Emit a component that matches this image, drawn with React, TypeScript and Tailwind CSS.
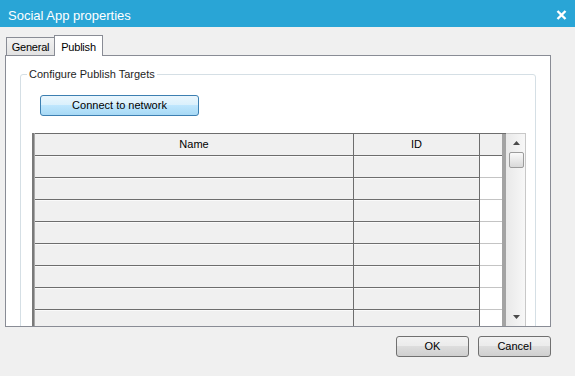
import React from "react";

const rows = Array.from({ length: 8 });

function CloseIcon() {
  return (
    <svg width="11" height="10" viewBox="0 0 11 10">
      <path d="M1.5 1 L9.5 9 M9.5 1 L1.5 9" stroke="#fff" strokeWidth="2.4" />
    </svg>
  );
}

function Arrow({ down }: { down?: boolean }) {
  return (
    <svg width="7" height="4" viewBox="0 0 7 4">
      <path d={down ? "M0 0 L7 0 L3.5 4Z" : "M0 4 L3.5 0 L7 4Z"} fill="#4a4a4a" />
    </svg>
  );
}

function Scrollbar() {
  return (
    <div className="flex w-[21px] flex-col border-r border-t border-[#c8c8c8] bg-gradient-to-r from-[#e9e9e9] to-[#f7f7f7] pb-px">
      <div className="flex h-[17px] items-center justify-center pl-px pt-px">
        <Arrow />
      </div>
      <div className="ml-[3px] mt-[1px] h-[16px] w-[15px] rounded-[2px] border border-[#9c9c9c] bg-gradient-to-b from-[#fafafa] to-[#d9d9d9]" />
      <div className="flex-1" />
      <div className="flex h-[17px] items-center justify-center pl-px">
        <Arrow down />
      </div>
    </div>
  );
}

function Grid() {
  return (
    <div className="flex h-[193px] w-[494px]">
      <div className="flex border-l-2 border-[#7a7a7a]">
        <div className="flex flex-col overflow-hidden border-l border-[#a8a8a8]">
          <div className="flex h-[23px] shrink-0 border-y border-[#6d6d6d] bg-[#f0f0f0] text-black">
            <div className="flex w-[319px] items-center justify-center border-r border-[#6d6d6d]">Name</div>
            <div className="flex w-[126px] items-center justify-center border-r border-[#6d6d6d]">ID</div>
            <div className="w-[22px]" />
          </div>
          {rows.map((_, i) => (
            <div key={i} className="flex h-[22px] shrink-0">
              <div className="w-[319px] border-b border-r border-[#6d6d6d] bg-[#f0f0f0] shadow-[inset_0_1px_0_#fafafa]" />
              <div className="w-[126px] border-b border-r border-[#6d6d6d] bg-[#f0f0f0] shadow-[inset_0_1px_0_#fafafa]" />
              <div className="w-[22px] border-b border-[#c4c4c4] bg-white" />
            </div>
          ))}
        </div>
        <div className="w-[4px] border-t border-[#6d6d6d] bg-[#a3a3a3]" />
      </div>
      <Scrollbar />
    </div>
  );
}

export default function App() {
  return (
    <div className="flex h-[376px] w-[575px] flex-col overflow-hidden bg-[#f0f0f0] font-['Liberation_Sans',Arial,sans-serif] text-[11px] text-black">
      <div className="flex h-[27px] shrink-0 items-center justify-between bg-[#29a5d6] px-[8px] pt-[3px] text-white">
        <span className="text-[13px] leading-[15px]">Social App properties</span>
        <span className="mb-[1px]">
          <CloseIcon />
        </span>
      </div>

      <div className="flex flex-col px-[5px]">
        <div className="relative z-10 mt-[8px] flex h-[20px] items-end pl-px">
          <div className="flex h-[18px] w-[48px] items-center justify-center border-l border-t border-[#898c95] bg-gradient-to-b from-[#f2f2f2] to-[#e2e2e2] pt-[1px] tracking-[-0.2px]">
            General
          </div>
          <div className="mb-[-1px] flex h-[21px] w-[49px] items-start justify-center border-x border-t border-[#898c95] bg-white pt-[3px] tracking-[-0.2px]">
            Publish
          </div>
        </div>

        <div className="h-[272px] w-[546px] overflow-hidden border border-[#898c95] bg-white pl-[14px] pt-[11px]">
          <fieldset className="h-[300px] w-[516px] rounded-[3px] border border-[#d5dfe5]">
            <legend className="ml-[6px] px-[2px] leading-[14px] text-[#1e1e1e]">Configure Publish Targets</legend>
            <div className="ml-[19px] mt-[14px] flex h-[21px] w-[159px] items-center justify-center rounded-[3px] border border-[#3c7fb1] bg-[linear-gradient(#eaf6fd_0%,#d9f0fc_50%,#bee6fd_50%,#a7d9f5_100%)]">
              Connect to network
            </div>
            <div className="ml-[11px] mt-[17px]">
              <Grid />
            </div>
          </fieldset>
        </div>

        <div className="mt-[9px] flex w-[546px] justify-end gap-[9px]">
          <div className="flex h-[21px] w-[73px] items-center justify-center rounded-[3px] border border-[#707070] bg-[linear-gradient(#f2f2f2_0%,#ebebeb_50%,#dddddd_50%,#cfcfcf_100%)]">
            OK
          </div>
          <div className="flex h-[21px] w-[73px] items-center justify-center rounded-[3px] border border-[#707070] bg-[linear-gradient(#f2f2f2_0%,#ebebeb_50%,#dddddd_50%,#cfcfcf_100%)]">
            Cancel
          </div>
        </div>
      </div>
    </div>
  );
}
